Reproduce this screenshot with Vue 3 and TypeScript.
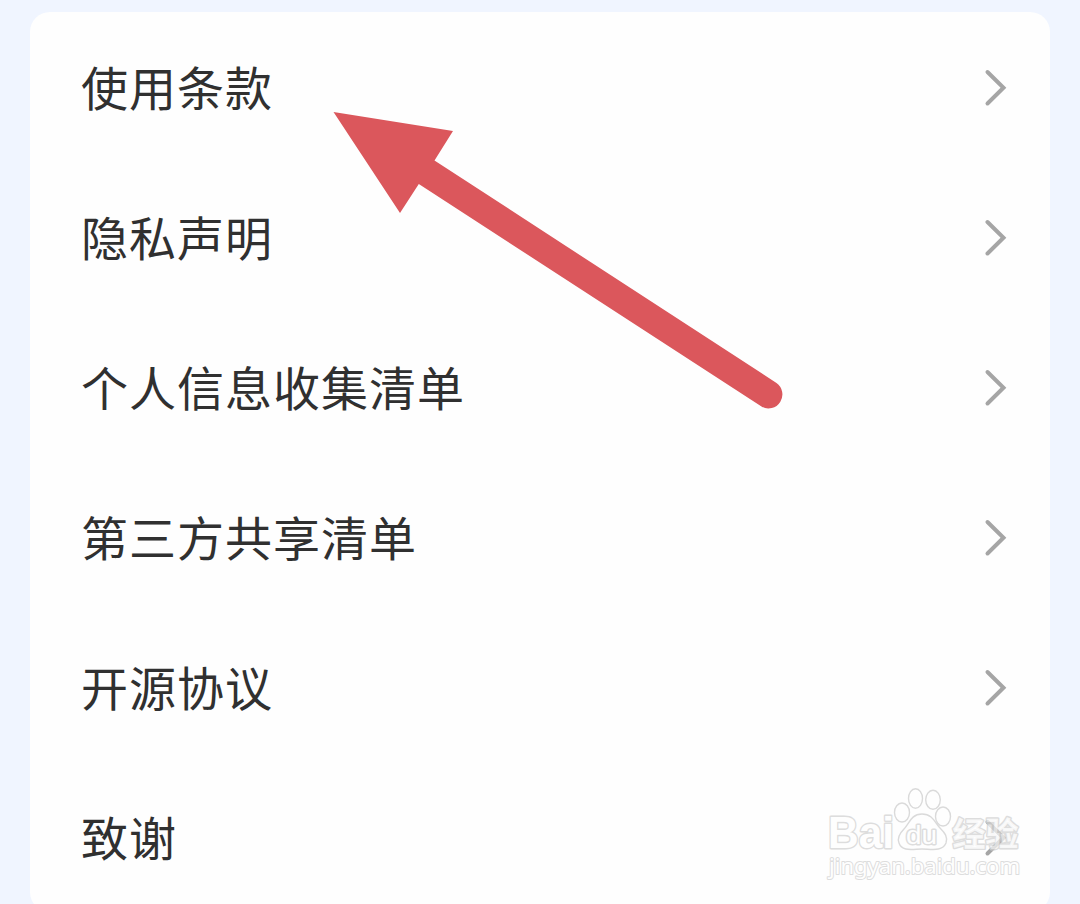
<script setup lang="ts">
const items: string[] = [
  '使用条款',
  '隐私声明',
  '个人信息收集清单',
  '第三方共享清单',
  '开源协议',
  '致谢',
]
</script>

<template>
  <main class="page">
    <ul class="card">
      <li v-for="item in items" :key="item" class="row">
        <span class="label">{{ item }}</span>
        <svg class="chevron" width="24" height="40" viewBox="0 0 24 40">
          <path d="M3.500 5 L19.500 20.700 L3.500 36.500" />
        </svg>
      </li>
    </ul>

    <svg class="pointer" width="460" height="310" viewBox="330 105 460 310">
      <path d="M333.500 112 L453 131 L434.5 160.5 L776.5 383 A14 14 0 0 1 761.5 406.6 L418.8 184 L400 213 Z" />
    </svg>

    <svg class="watermark" width="210" height="110" viewBox="0 0 210 110">
      <g class="outline">
        <text class="latin" x="8" y="68" textLength="66" lengthAdjust="spacingAndGlyphs">Bai</text>
        <g class="paw">
          <ellipse cx="82" cy="32.500" rx="7.500" ry="9.500" />
          <ellipse cx="95.500" cy="18.500" rx="7" ry="9.700" />
          <ellipse cx="113" cy="19.800" rx="7.300" ry="9.500" />
          <ellipse cx="123" cy="36.500" rx="7.500" ry="9.500" />
          <path d="M102 34 C91 34 89 44 84 49 C79 54 77 58 79 63 C82 72 93 69 102 69 C111 69 122 72 126 63 C128 57 125 53 120 48 C115 43 113 34 102 34 Z" />
        </g>
        <text class="du" x="86" y="64" textLength="31" lengthAdjust="spacingAndGlyphs">du</text>
        <text class="han" x="132.500" y="65.500" textLength="66" lengthAdjust="spacingAndGlyphs">经验</text>
        <text class="site" x="9" y="94" textLength="191" lengthAdjust="spacingAndGlyphs">jingyan.baidu.com</text>
      </g>
    </svg>
  </main>
</template>

<style>
body {
  margin: 0;
  background: #f0f4ff;
}
</style>

<style scoped>
.page {
  position: relative;
  box-sizing: border-box;
  width: 1080px;
  height: 904px;
  padding: 12px 30px 0;
  overflow: hidden;
  background: #f0f5ff;
}

.card {
  margin: 0;
  padding: 0;
  list-style: none;
  border-radius: 20px;
  background: #fefefe;
}

.row {
  display: flex;
  align-items: center;
  justify-content: space-between;
  box-sizing: border-box;
  height: 150px;
  padding: 0 42px 0 51px;
}

.label {
  padding-bottom: 3px;
  color: #303030;
  font-family: "Noto Sans CJK SC", sans-serif;
  font-size: 47px;
  line-height: 72px;
  letter-spacing: 1px;
}

.chevron path {
  fill: none;
  stroke: #a5a5a5;
  stroke-width: 4;
  stroke-linecap: round;
}

.pointer {
  position: absolute;
  left: 330px;
  top: 105px;
  fill: #db575c;
}

.watermark {
  position: absolute;
  left: 820px;
  top: 780px;
}

.outline {
  fill: #fff;
  stroke: #d2d2d2;
  stroke-width: 2.8;
  stroke-linejoin: round;
  paint-order: stroke;
  font-family: "Liberation Sans", Arial, sans-serif;
  opacity: 0.75;
}

.paw {
  stroke: #cfcfcf;
  stroke-width: 1.4;
  paint-order: normal;
}

.latin {
  font-size: 45px;
  font-weight: 700;
}

.du {
  font-size: 25px;
}

.han {
  font-family: "Noto Sans CJK SC", sans-serif;
  font-size: 33px;
  font-weight: 700;
  fill-opacity: 0.8;
}

.site {
  font-family: "Noto Sans", sans-serif;
  font-size: 22.5px;
  stroke-width: 2;
}
</style>
